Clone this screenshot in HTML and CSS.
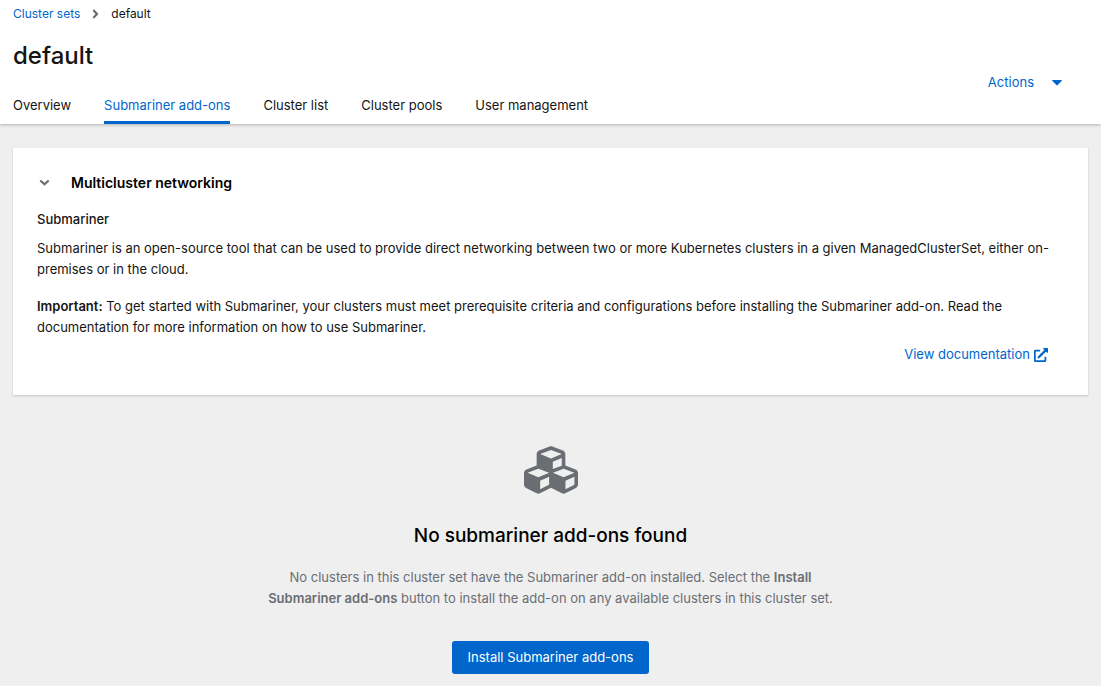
FILE: index.html
```html
<!DOCTYPE html>
<html lang="en">
<head>
<meta charset="utf-8">
<meta name="viewport" content="width=device-width, initial-scale=1">
<title>default - Cluster sets</title>
<link rel="stylesheet" href="styles.css">
</head>
<body>
<header class="page-header">
  <div class="header-main">
    <nav class="breadcrumb" aria-label="Breadcrumb">
      <a href="#">Cluster sets</a>
      <svg class="breadcrumb-divider" viewBox="0 0 256 512" aria-hidden="true"><path d="M224.3 273l-136 136c-9.4 9.4-24.6 9.4-33.9 0l-22.6-22.6c-9.4-9.4-9.4-24.6 0-33.9l96.4-96.4-96.4-96.4c-9.4-9.4-9.4-24.6 0-33.9L54.3 103c9.4-9.4 24.6-9.4 33.9 0l136 136c9.5 9.4 9.5 24.6.1 34z"/></svg>
      <span>default</span>
    </nav>
    <h1 class="page-title">default</h1>
    <nav class="tabs" aria-label="Cluster set">
      <a class="tab" href="#">Overview</a>
      <a class="tab tab-current" href="#" aria-current="page">Submariner add-ons</a>
      <a class="tab" href="#">Cluster list</a>
      <a class="tab" href="#">Cluster pools</a>
      <a class="tab" href="#">User management</a>
    </nav>
  </div>
  <button class="actions" type="button">Actions
    <svg class="caret" viewBox="0 0 10 6" aria-hidden="true"><path d="M.8 0h8.4q1.1.2.4 1.1L5.600 5.100q-.6.6-1.200 0L.4 1.100Q-.3.2.8 0z"/></svg>
  </button>
</header>
<main class="content">
  <section class="card">
    <div class="card-header">
      <button class="toggle" type="button" aria-label="Collapse Multicluster networking" aria-expanded="true">
        <svg class="chevron" viewBox="0 0 10 6" aria-hidden="true"><path d="M1.200 1.200L5 4.600l3.800-3.400"/></svg>
      </button>
      <h2 class="card-title">Multicluster networking</h2>
    </div>
    <h3 class="card-subtitle">Submariner</h3>
    <p class="card-text">Submariner is an open-source tool that can be used to provide direct networking between two or more Kubernetes clusters in a given ManagedClusterSet, either on-premises or in the cloud.</p>
    <p class="card-text"><strong>Important:</strong> To get started with Submariner, your clusters must meet prerequisite criteria and configurations before installing the Submariner add-on. Read the documentation for more information on how to use Submariner.</p>
    <div class="card-footer">
      <a class="doc-link" href="#">View documentation
        <svg class="external" viewBox="0 0 512 512" aria-hidden="true"><path d="M432,320H400a16,16,0,0,0-16,16V448H64V128H208a16,16,0,0,0,16-16V80a16,16,0,0,0-16-16H48A48,48,0,0,0,0,112V464a48,48,0,0,0,48,48H400a48,48,0,0,0,48-48V336A16,16,0,0,0,432,320ZM488,0h-128c-21.37,0-32.05,25.91-17,41l35.73,35.73L135,320.37a24,24,0,0,0,0,34L157.67,377a24,24,0,0,0,34,0L435.28,133.32,471,169c15,15,41,4.5,41-17V24A24,24,0,0,0,488,0Z"/></svg>
      </a>
    </div>
  </section>
  <section class="empty">
    <svg class="cubes" viewBox="0 32 512 448" aria-hidden="true"><path d="M488.600 250.200L392 214V105.500c0-15-9.300-28.400-23.400-33.700l-100-37.500c-8.100-3.100-17.100-3.100-25.300 0l-100 37.500c-14.100 5.300-23.400 18.700-23.400 33.700V214l-96.600 36.200C9.300 255.500 0 268.900 0 283.900V394c0 13.600 7.700 26.100 19.900 32.200l100 50c10.100 5.100 22.100 5.100 32.200 0l103.900-52 103.900 52c10.100 5.100 22.100 5.100 32.200 0l100-50c12.200-6.100 19.900-18.600 19.900-32.200V283.900c0-15-9.300-28.400-23.400-33.700zM358 214.800l-85 31.900v-68.200l85-37v73.300zM154 104.100l102-38.200 102 38.200v.6l-102 41.400-102-41.400v-.6zm84 291.100l-85 42.500v-79.100l85-38.800v75.400zm0-112l-102 41.400-102-41.400v-.6l102-38.200 102 38.200v.6zm240 112l-85 42.500v-79.100l85-38.800v75.400zm0-112l-102 41.400-102-41.400v-.6l102-38.200 102 38.200v.6z"/></svg>
    <h2 class="empty-title">No submariner add-ons found</h2>
    <p class="empty-text">No clusters in this cluster set have the Submariner add-on installed. Select the <strong>Install Submariner add-ons</strong> button to install the add-on on any available clusters in this cluster set.</p>
    <button class="primary" type="button">Install Submariner add-ons</button>
  </section>
</main>
</body>
</html>
```
FILE: styles.css
```css
* { box-sizing: border-box; }
body {
  margin: 0;
  background: #efefef;
  color: #151515;
  font: 13px/21px Inter, "Liberation Sans", sans-serif;
}
h1, h2, h3, p { margin: 0; font-weight: 500; }
p { font-weight: 400; }
strong { font-weight: 600; }
a { color: #06c; text-decoration: none; }
button { font: inherit; border: 0; background: none; padding: 0; cursor: pointer; }
svg { fill: currentColor; flex: none; }

.page-header {
  position: relative;
  display: flex;
  justify-content: space-between;
  align-items: center;
  padding: 3px 39px 0 13px;
  background: #fff;
  box-shadow: 0 1px 3px rgba(3, 3, 3, 0.25);
}
.breadcrumb { display: flex; align-items: center; font-size: 12px; }
.breadcrumb-divider { width: 7px; height: 14px; margin: 0 12px; color: #6a6e73; }
.page-title { margin-top: 16px; font-size: 24px; line-height: 31px; }
.tabs { display: flex; gap: 33px; margin-top: 16px; }
.tab { padding: 8px 0 5px; color: #151515; border-bottom: 3px solid transparent; white-space: nowrap; }
.tab-current { color: #06c; border-bottom-color: #06c; }
.actions { display: flex; align-items: center; gap: 18px; margin-top: 38px; color: #06c; }
.caret { width: 10px; height: 6px; }

.content { padding: 24px 13px 12px; }
.card {
  padding: 24px;
  background: #fff;
  box-shadow: 0 1px 2px rgba(3, 3, 3, 0.18);
}
.card-header { display: flex; align-items: center; }
.toggle { display: flex; padding: 0 21px 0 2px; color: #6a6e73; }
.chevron { width: 11px; height: 7px; fill: none; stroke: currentColor; stroke-width: 2; }
.card-title { color: #000; font-size: 14px; font-weight: 600; }
.card-subtitle { margin: 16px 0 8px; font-size: 13px; }
.card-text + .card-text { margin-top: 16px; }
.card-footer { display: flex; justify-content: flex-end; padding: 6px 16px 6px 0; }
.doc-link { display: flex; align-items: center; gap: 4px; }
.external { width: 14px; height: 14px; }

.empty {
  display: flex;
  flex-direction: column;
  align-items: center;
  max-width: 576px;
  margin: 0 auto;
  padding-top: 51px;
  text-align: center;
}
.cubes { width: 54px; height: 48px; color: #6a6e73; }
.empty-title { margin-top: 27px; color: #000; font-size: 19px; line-height: 30px; }
.empty-text { margin-top: 16px; color: #6a6e73; }
.primary {
  margin-top: 32px;
  padding: 6px 16px;
  border-radius: 3px;
  background: #06c;
  color: #fff;
}
```
